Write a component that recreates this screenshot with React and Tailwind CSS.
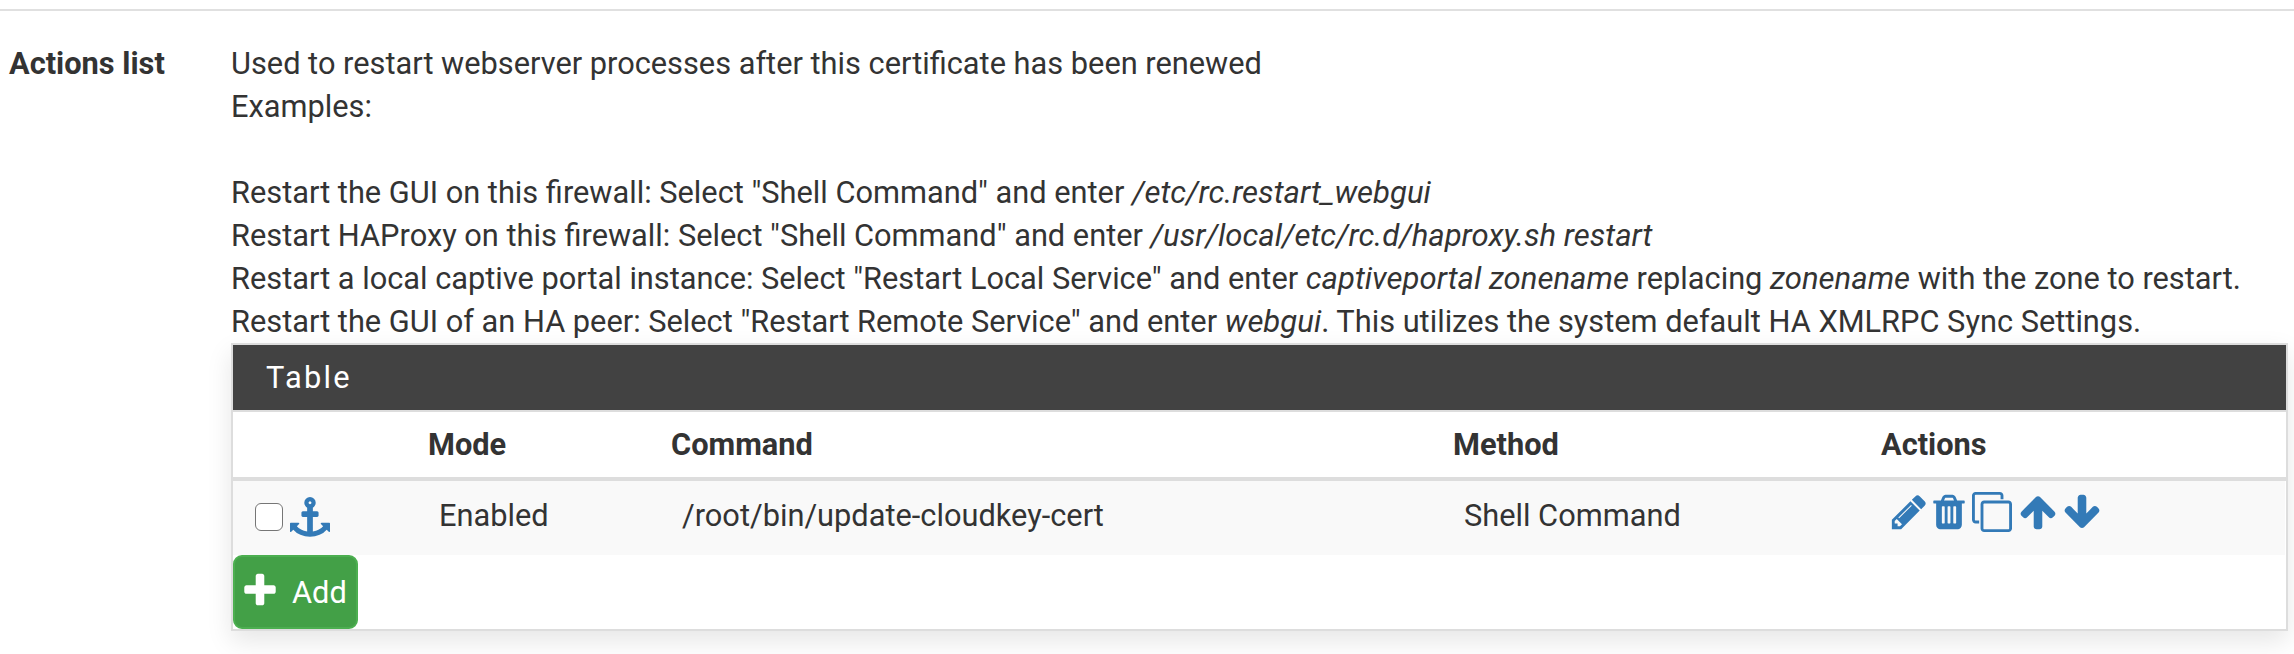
const ICONS = {
  anchor:
    "M960 256q0-26-19-45t-45-19-45 19-19 45 19 45 45 19 45-19 19-45zm832 928v352q0 22-20 30-8 2-12 2-12 0-23-9l-93-93q-119 143-318.5 226.5t-429.5 83.5-429.5-83.5-318.5-226.5l-93 93q-9 9-23 9-4 0-12-2-20-8-20-30v-352q0-14 9-23t23-9h352q22 0 30 20 8 19-7 35l-100 100q67 91 189.5 153.5t271.5 82.5v-647h-192q-26 0-45-19t-19-45v-128q0-26 19-45t45-19h192v-163q-58-34-93-92.5t-35-128.5q0-106 75-181t181-75 181 75 75 181q0 70-35 128.5t-93 92.5v163h192q26 0 45 19t19 45v128q0 26-19 45t-45 19h-192v647q149-20 271.5-82.5t189.5-153.5l-100-100q-15-16-7-35 8-20 30-20h352q14 0 23 9t9 23z",
  pencil:
    "M491 1536l91-91-235-235-91 91v107h128v128h107zm523-928q0-22-22-22-10 0-17 7l-542 542q-7 7-7 17 0 22 22 22 10 0 17-7l542-542q7-7 7-17zm-54-192l416 416-832 832h-416v-416zm683 96q0 53-37 90l-166 166-416-416 166-165q36-38 90-38 53 0 91 38l235 234q37 39 37 91z",
  trash:
    "M704 1376v-704q0-14-9-23t-23-9h-64q-14 0-23 9t-9 23v704q0 14 9 23t23 9h64q14 0 23-9t9-23zm256 0v-704q0-14-9-23t-23-9h-64q-14 0-23 9t-9 23v704q0 14 9 23t23 9h64q14 0 23-9t9-23zm256 0v-704q0-14-9-23t-23-9h-64q-14 0-23 9t-9 23v704q0 14 9 23t23 9h64q14 0 23-9t9-23zm-544-992h448l-48-117q-7-9-17-11h-317q-10 2-17 11zm928 32v64q0 14-9 23t-23 9h-96v948q0 83-47 143.5t-113 60.5h-832q-66 0-113-58.5t-47-141.5v-952h-96q-14 0-23-9t-9-23v-64q0-14 9-23t23-9h309l70-167q15-37 54-63t79-26h320q40 0 79 26t54 63l70 167h309q14 0 23 9t9 23z",
  clone:
    "M1664 1632v-1088q0-13-9.5-22.5t-22.5-9.5h-1088q-13 0-22.5 9.5t-9.5 22.5v1088q0 13 9.5 22.5t22.5 9.5h1088q13 0 22.5-9.5t9.5-22.5zm128-1088v1088q0 66-47 113t-113 47h-1088q-66 0-113-47t-47-113v-1088q0-66 47-113t113-47h1088q66 0 113 47t47 113zm-384-384v160h-128v-160q0-13-9.5-22.5t-22.5-9.5h-1088q-13 0-22.5 9.5t-9.5 22.5v1088q0 13 9.5 22.5t22.5 9.5h160v128h-160q-66 0-113-47t-47-113v-1088q0-66 47-113t113-47h1088q66 0 113 47t47 113z",
  arrowUp:
    "M1675 971q0 51-37 90l-75 75q-38 38-91 38-54 0-90-38l-294-293v704q0 52-37.5 84.5t-90.5 32.5h-128q-53 0-90.5-32.5t-37.5-84.5v-704l-294 293q-36 38-90 38t-90-38l-75-75q-38-38-38-90 0-53 38-91l651-651q35-37 90-37 54 0 91 37l651 651q37 39 37 91z",
  arrowDown:
    "M1675 832q0 53-37 90l-651 652q-39 37-91 37-53 0-90-37l-651-652q-38-36-38-90 0-53 38-91l74-75q39-37 91-37 53 0 90 37l294 294v-704q0-52 38-90t90-38h128q52 0 90 38t38 90v704l294-294q37-37 90-37 52 0 91 37l75 75q37 39 37 91z",
  plus:
    "M1600 736v192q0 40-28 68t-68 28h-416v416q0 40-28 68t-68 28h-192q-40 0-68-28t-28-68v-416h-416q-40 0-68-28t-28-68v-192q0-40 28-68t68-28h416v-416q0-40 28-68t68-28h192q40 0 68 28t28 68v416h416q40 0 68 28t28 68z",
};

function Icon({ name, className = "" }) {
  return (
    <svg viewBox="0 0 1792 1792" className={`size-10 shrink-0 fill-current ${className}`} aria-hidden="true">
      <path d={ICONS[name]} />
    </svg>
  );
}

function Em({ children }) {
  return <i className="text-[31.1px]">{children}</i>;
}

function ActionsTable() {
  return (
    <section className="w-[2057px] border-2 border-[#ddd] bg-white shadow-[0_10px_24px_rgba(0,0,0,0.1)]">
      <h2 className="h-[65px] bg-[#424242] pt-[11px] pl-[33px] tracking-[2.3px] text-white">Table</h2>
      <div className="grid h-[71px] grid-cols-[195px_243px_782px_428px_1fr] border-t-2 border-b-4 border-[#ddd] pt-[11px] font-bold">
        <span />
        <span>Mode</span>
        <span>Command</span>
        <span>Method</span>
        <span>Actions</span>
      </div>
      <div className="mr-px grid h-[74px] grid-cols-[206px_243px_782px_425px_1fr] bg-[#f9f9f9] pt-[11px]">
        <div className="flex pl-[22px]">
          <input
            type="checkbox"
            className="mt-[11px] size-7 appearance-none rounded-md border border-[#767676] bg-white"
          />
          <Icon name="anchor" className="mt-[5px] ml-[7px] text-[#337ab7]" />
        </div>
        <span className="pt-0.5">Enabled</span>
        <span className="pt-0.5">/root/bin/update-cloudkey-cert</span>
        <span className="pt-0.5">Shell Command</span>
        <div className="flex text-[#337ab7]">
          <Icon name="pencil" />
          <Icon name="trash" />
          <Icon name="clone" className="ml-[3px]" />
          <Icon name="arrowUp" className="ml-[6px]" />
          <Icon name="arrowDown" className="ml-[4px]" />
        </div>
      </div>
      <button className="flex h-[74px] w-[125px] rounded-[9px] border-2 border-[#4caf50] bg-[#43a047] pt-[14px] pl-[5px] text-white">
        <Icon name="plus" />
        <span className="ml-3">Add</span>
      </button>
    </section>
  );
}

export default function App() {
  return (
    <main className="h-[654px] overflow-hidden bg-white pt-[9px] font-['Roboto',sans-serif] text-[30.78px] leading-[43px] text-[#333]">
      <div className="flex border-t-2 border-[#e0e0e0] pt-[31px]">
        <div className="w-[231px] shrink-0 pl-[9px] font-bold">Actions list</div>
        <div>
          <p className="h-[301px] whitespace-nowrap">
            Used to restart webserver processes after this certificate has been renewed
            <br />
            Examples:
            <br />
            <br />
            Restart the GUI on this firewall: Select "Shell Command" and enter <Em>/etc/rc.restart_webgui</Em>
            <br />
            Restart HAProxy on this firewall: Select "Shell Command" and enter{" "}
            <Em>/usr/local/etc/rc.d/haproxy.sh restart</Em>
            <br />
            Restart a local captive portal instance: Select "Restart Local Service" and enter{" "}
            <Em>captiveportal zonename</Em> replacing <Em>zonename</Em> with the zone to restart.
            <br />
            Restart the GUI of an HA peer: Select "Restart Remote Service" and enter <Em>webgui</Em>. This utilizes the
            system default HA XMLRPC Sync Settings.
          </p>
          <ActionsTable />
        </div>
      </div>
    </main>
  );
}
